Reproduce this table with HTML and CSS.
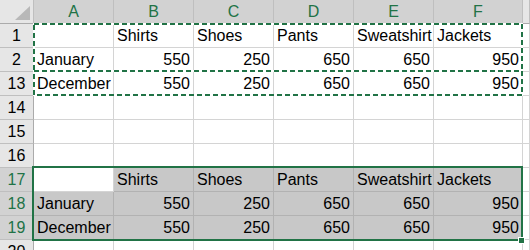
FILE: index.html
```html
<!DOCTYPE html>
<html lang="en">
<head>
    <meta charset="UTF-8">
    <title>Sheet</title>
    <link rel="stylesheet" href="styles.css">
</head>
<body>
    <div class="sheet">
        <div class="row head">
            <div class="corner"><svg width="33" height="23"><polygon points="15,20 30,20 30,6" fill="#b8b8b8"/></svg></div>
            <div class="ch sel">A</div>
            <div class="ch sel">B</div>
            <div class="ch sel">C</div>
            <div class="ch sel">D</div>
            <div class="ch sel">E</div>
            <div class="ch sel">F</div>
            <div class="ch"></div>
        </div>
        <div class="row">
            <div class="rh">1</div>
            <div class="c"></div>
            <div class="c">Shirts</div>
            <div class="c">Shoes</div>
            <div class="c">Pants</div>
            <div class="c">Sweatshirt</div>
            <div class="c">Jackets</div>
            <div class="c"></div>
        </div>
        <div class="row">
            <div class="rh">2</div>
            <div class="c">January</div>
            <div class="c num">550</div>
            <div class="c num">250</div>
            <div class="c num">650</div>
            <div class="c num">650</div>
            <div class="c num">950</div>
            <div class="c"></div>
        </div>
        <div class="row">
            <div class="rh">13</div>
            <div class="c">December</div>
            <div class="c num">550</div>
            <div class="c num">250</div>
            <div class="c num">650</div>
            <div class="c num">650</div>
            <div class="c num">950</div>
            <div class="c"></div>
        </div>
        <div class="row">
            <div class="rh">14</div>
            <div class="c"></div><div class="c"></div><div class="c"></div><div class="c"></div><div class="c"></div><div class="c"></div><div class="c"></div>
        </div>
        <div class="row">
            <div class="rh">15</div>
            <div class="c"></div><div class="c"></div><div class="c"></div><div class="c"></div><div class="c"></div><div class="c"></div><div class="c"></div>
        </div>
        <div class="row">
            <div class="rh">16</div>
            <div class="c"></div><div class="c"></div><div class="c"></div><div class="c"></div><div class="c"></div><div class="c"></div><div class="c"></div>
        </div>
        <div class="row">
            <div class="rh sel">17</div>
            <div class="c"></div>
            <div class="c shade">Shirts</div>
            <div class="c shade">Shoes</div>
            <div class="c shade">Pants</div>
            <div class="c shade">Sweatshirt</div>
            <div class="c shade">Jackets</div>
            <div class="c"></div>
        </div>
        <div class="row">
            <div class="rh sel">18</div>
            <div class="c shade">January</div>
            <div class="c shade num">550</div>
            <div class="c shade num">250</div>
            <div class="c shade num">650</div>
            <div class="c shade num">650</div>
            <div class="c shade num">950</div>
            <div class="c"></div>
        </div>
        <div class="row">
            <div class="rh sel">19</div>
            <div class="c shade">December</div>
            <div class="c shade num">550</div>
            <div class="c shade num">250</div>
            <div class="c shade num">650</div>
            <div class="c shade num">650</div>
            <div class="c shade num">950</div>
            <div class="c"></div>
        </div>
        <div class="row">
            <div class="rh">20</div>
            <div class="c"></div><div class="c"></div><div class="c"></div><div class="c"></div><div class="c"></div><div class="c"></div><div class="c"></div>
        </div>

        <!-- copy marquee over A1:F2 and A13:F13 -->
        <svg class="marquee" width="530" height="250">
            <rect x="34" y="24" width="488" height="47" fill="none" stroke="#fff" stroke-width="2"/>
            <rect x="34" y="24" width="488" height="47" fill="none" stroke="#217346" stroke-width="2" stroke-dasharray="5 3"/>
            <rect x="34" y="71" width="488" height="24" fill="none" stroke="#fff" stroke-width="2"/>
            <rect x="34" y="71" width="488" height="24" fill="none" stroke="#217346" stroke-width="2" stroke-dasharray="5 3"/>
        </svg>

        <!-- selection A17:F19 -->
        <div class="selection"></div>
        <div class="handle"></div>
    </div>
</body>
</html>
```

FILE: styles.css
```css
body {
    margin: 0;
    background: #fff;
    font-family: "Liberation Sans", Arial, sans-serif;
    overflow: hidden;
}
.sheet {
    position: relative;
    width: 530px;
    height: 250px;
    overflow: hidden;
}
.row {
    display: grid;
    grid-template-columns: 34px 80px 80px 80px 80px 80px 89px 1fr;
    height: 24px;
}
.row > div {
    box-sizing: border-box;
    height: 24px;
    border-right: 1px solid #d4d4d4;
    border-bottom: 1px solid #d4d4d4;
    font-size: 16px;
    line-height: 24px;
    white-space: nowrap;
    color: #000;
}
.head > div {
    background: #e6e6e6;
    border-right: 1px solid #bfbfbf;
    border-bottom: 1px solid #ababab;
    text-align: center;
    line-height: 23px;
    color: #444;
}
.head .sel {
    background: #d2d2d2;
    color: #217346;
    border-bottom-color: #217346;
}
.corner {
    padding: 0;
}
.corner svg {
    display: block;
}
.rh {
    background: #e6e6e6;
    text-align: center;
    color: #444;
    border-right-color: #ababab !important;
    border-bottom-color: #bfbfbf !important;
}
.rh.sel {
    background: #d2d2d2;
    color: #217346;
}
.c {
    padding: 0 3px;
}
.num {
    text-align: right;
}
.shade {
    background: #c8c8c8;
    border-right-color: #b2b2b2 !important;
    border-bottom-color: #b2b2b2 !important;
}
.marquee {
    position: absolute;
    left: 0;
    top: 0;
    pointer-events: none;
}
.selection {
    position: absolute;
    left: 32px;
    top: 166px;
    width: 491px;
    height: 75px;
    box-sizing: border-box;
    border: 2px solid #217346;
}
.handle {
    position: absolute;
    left: 518px;
    top: 237px;
    width: 5px;
    height: 5px;
    background: #217346;
    border: 1px solid #fff;
}
```
